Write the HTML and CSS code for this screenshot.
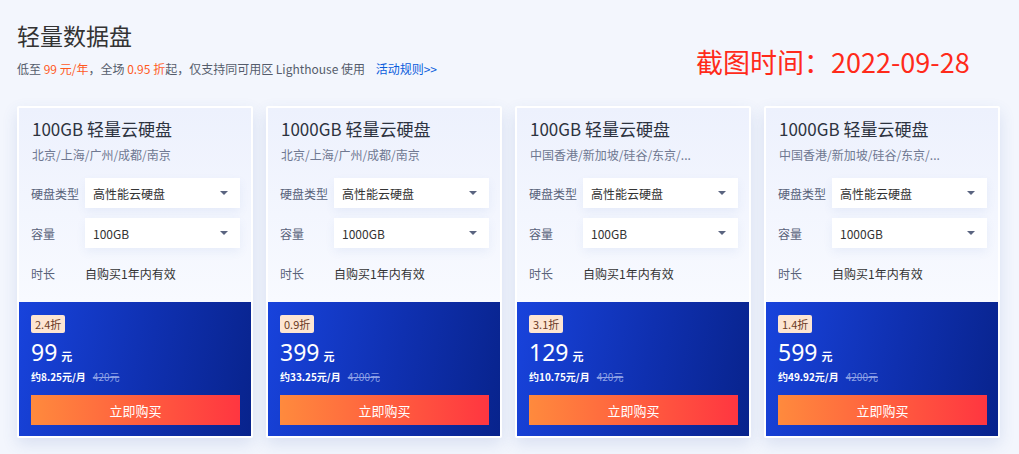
FILE: index.html
```html
<!DOCTYPE html>
<html lang="zh-CN">
	<head>
		<meta charset="UTF-8" />
		<meta name="viewport" content="width=device-width, initial-scale=1.0" />
		<title>轻量数据盘</title>
		<link rel="stylesheet" href="styles.css">
	</head>
	<body>
		<div class="page">
			<div class="header">
				<h1>轻量数据盘</h1>
				<p class="intro">低至 <em>99 元/年</em>，全场 <em>0.95 折</em>起，仅支持同可用区 Lighthouse 使用 <a href="#" class="rules">活动规则&gt;&gt;</a></p>
			</div>
			<div class="stamp">截图时间：2022-09-28</div>

			<div class="cards">
				<div class="card">
					<div class="card-top">
						<h2>100GB 轻量云硬盘</h2>
						<p class="region">北京/上海/广州/成都/南京</p>
						<div class="row"><span class="label">硬盘类型</span><div class="select">高性能云硬盘<i class="arrow"></i></div></div>
						<div class="row"><span class="label">容量</span><div class="select">100GB<i class="arrow"></i></div></div>
						<div class="row"><span class="label">时长</span><span class="value">自购买1年内有效</span></div>
					</div>
					<div class="card-bottom">
						<span class="badge">2.4折</span>
						<div class="price"><span class="amount">99</span><span class="unit">元</span></div>
						<div class="monthly">约8.25元/月<s>420元</s></div>
						<button>立即购买</button>
					</div>
				</div>

				<div class="card">
					<div class="card-top">
						<h2>1000GB 轻量云硬盘</h2>
						<p class="region">北京/上海/广州/成都/南京</p>
						<div class="row"><span class="label">硬盘类型</span><div class="select">高性能云硬盘<i class="arrow"></i></div></div>
						<div class="row"><span class="label">容量</span><div class="select">1000GB<i class="arrow"></i></div></div>
						<div class="row"><span class="label">时长</span><span class="value">自购买1年内有效</span></div>
					</div>
					<div class="card-bottom">
						<span class="badge">0.9折</span>
						<div class="price"><span class="amount">399</span><span class="unit">元</span></div>
						<div class="monthly">约33.25元/月<s>4200元</s></div>
						<button>立即购买</button>
					</div>
				</div>

				<div class="card">
					<div class="card-top">
						<h2>100GB 轻量云硬盘</h2>
						<p class="region">中国香港/新加坡/硅谷/东京/...</p>
						<div class="row"><span class="label">硬盘类型</span><div class="select">高性能云硬盘<i class="arrow"></i></div></div>
						<div class="row"><span class="label">容量</span><div class="select">100GB<i class="arrow"></i></div></div>
						<div class="row"><span class="label">时长</span><span class="value">自购买1年内有效</span></div>
					</div>
					<div class="card-bottom">
						<span class="badge">3.1折</span>
						<div class="price"><span class="amount">129</span><span class="unit">元</span></div>
						<div class="monthly">约10.75元/月<s>420元</s></div>
						<button>立即购买</button>
					</div>
				</div>

				<div class="card">
					<div class="card-top">
						<h2>1000GB 轻量云硬盘</h2>
						<p class="region">中国香港/新加坡/硅谷/东京/...</p>
						<div class="row"><span class="label">硬盘类型</span><div class="select">高性能云硬盘<i class="arrow"></i></div></div>
						<div class="row"><span class="label">容量</span><div class="select">1000GB<i class="arrow"></i></div></div>
						<div class="row"><span class="label">时长</span><span class="value">自购买1年内有效</span></div>
					</div>
					<div class="card-bottom">
						<span class="badge">1.4折</span>
						<div class="price"><span class="amount">599</span><span class="unit">元</span></div>
						<div class="monthly">约49.92元/月<s>4200元</s></div>
						<button>立即购买</button>
					</div>
				</div>
			</div>
		</div>
	</body>
</html>
```

FILE: styles.css
```css
body {
	margin: 0;
	padding: 0;
	background-color: #f3f6fd;
	font-family: "Noto Sans CJK SC", "Noto Sans", sans-serif;
	color: #333;
}
.page {
	position: relative;
	padding: 20px 17px 0;
	height: 434px;
}
.header h1 {
	margin: 0;
	font-size: 23px;
	line-height: 30px;
	font-weight: 400;
	color: #333;
}
.intro {
	margin: 10px 0 0;
	font-size: 12px;
	line-height: 18px;
	color: #555c6b;
}
.intro em {
	font-style: normal;
	color: #ff5a1f;
}
.rules {
	margin-left: 8px;
	color: #0a5cdc;
	text-decoration: none;
}
.stamp {
	position: absolute;
	left: 696px;
	top: 44px;
	font-size: 27px;
	line-height: 36px;
	color: #ff2a1a;
}
.cards {
	display: flex;
	gap: 13px;
	margin-top: 28px;
}
.card {
	width: 236px;
	box-sizing: border-box;
	border: 2px solid #fff;
	border-radius: 2px;
	box-shadow: 0 6px 16px rgba(60, 90, 170, 0.14);
	overflow: hidden;
}
.card-top {
	padding: 9px 11px 14px 12px;
	background: linear-gradient(180deg, #edf1fd 0%, #f8faff 100%);
}
.card-top h2 {
	margin: 0 0 0 1px;
	font-size: 17px;
	line-height: 24px;
	font-weight: 400;
	color: #2d3340;
}
.region {
	margin: 5px 0 0 1px;
	font-size: 12px;
	line-height: 18px;
	color: #6f7891;
	white-space: nowrap;
}
.row {
	display: flex;
	align-items: center;
	height: 30px;
	margin-top: 10px;
	font-size: 12px;
}
.region + .row {
	margin-top: 14px;
}
.label {
	width: 54px;
	color: #59627a;
}
.select {
	flex: 1;
	display: flex;
	align-items: center;
	justify-content: space-between;
	height: 30px;
	padding: 0 12px 0 8px;
	background: #fff;
	font-size: 12px;
	color: #333;
	box-shadow: 0 4px 10px rgba(80, 110, 190, 0.08);
}
.arrow {
	width: 0;
	height: 0;
	border-left: 4px solid transparent;
	border-right: 4px solid transparent;
	border-top: 4px solid #5a6480;
}
.value {
	color: #333;
}
.card-bottom {
	display: flex;
	flex-direction: column;
	align-items: flex-start;
	padding: 13px 11px 11px 12px;
	background: linear-gradient(100deg, #1843dc 0%, #0f30b0 55%, #08238c 100%);
	color: #fff;
}
.badge {
	padding: 0 4px;
	height: 18px;
	line-height: 18px;
	font-size: 11px;
	color: #6b3b25;
	background: #fde5d2;
	border-radius: 2px;
}
.price {
	display: flex;
	align-items: baseline;
	height: 30px;
	margin-top: 4px;
	color: #fff;
}
.amount {
	font-family: "Noto Sans", sans-serif;
	font-size: 23px;
	line-height: 30px;
}
.unit {
	margin-left: 4px;
	font-size: 11px;
	line-height: 14px;
	font-weight: 700;
}
.monthly {
	font-size: 10px;
	line-height: 20px;
	font-weight: 700;
}
.monthly s {
	margin-left: 7px;
	font-weight: 400;
	color: #8fa2e6;
}
button {
	display: block;
	width: 100%;
	height: 30px;
	margin-top: 8px;
	border: none;
	background: linear-gradient(90deg, #ff8a3d 0%, #ff3640 100%);
	color: #fff;
	font-family: inherit;
	font-size: 13px;
	cursor: pointer;
}
```
